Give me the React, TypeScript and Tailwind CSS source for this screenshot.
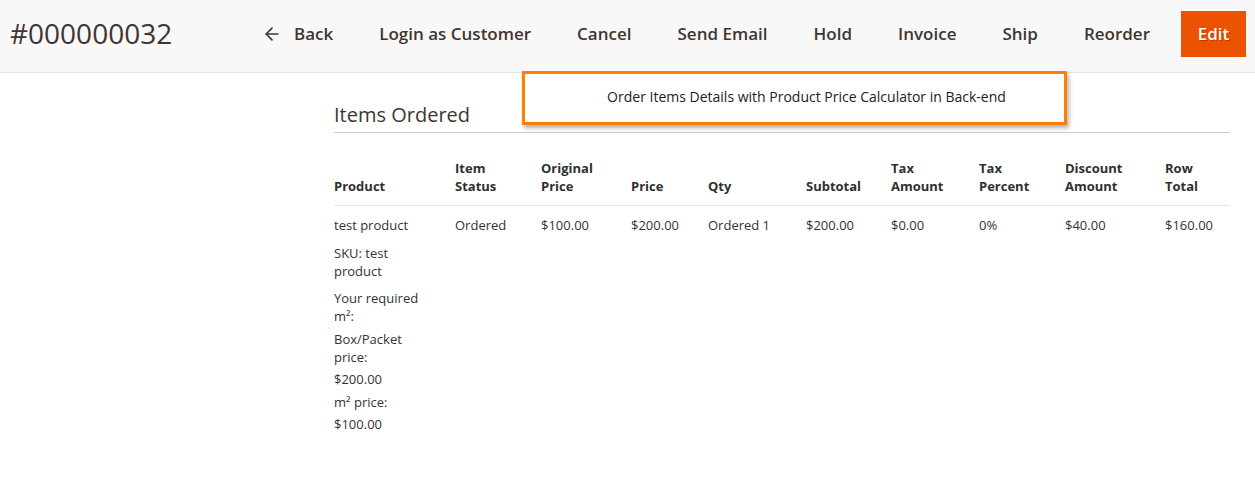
import { ArrowLeft } from "lucide-react";

const ACTIONS = ["Login as Customer", "Cancel", "Send Email", "Hold", "Invoice", "Ship", "Reorder"];

const COLUMNS = [
  { label: ["", "Product"], w: "w-[121px]" },
  { label: ["Item", "Status"], w: "w-[86px]" },
  { label: ["Original", "Price"], w: "w-[90px]" },
  { label: ["", "Price"], w: "w-[77px]" },
  { label: ["", "Qty"], w: "w-[98px]" },
  { label: ["", "Subtotal"], w: "w-[85px]" },
  { label: ["Tax", "Amount"], w: "w-[88px]" },
  { label: ["Tax", "Percent"], w: "w-[86px]" },
  { label: ["Discount", "Amount"], w: "w-[100px]" },
  { label: ["Row", "Total"], w: "w-[65px]" },
];

const VALUES = ["Ordered", "$100.00", "$200.00", "Ordered 1", "$200.00", "$0.00", "0%", "$40.00", "$160.00"];

export default function App() {
  return (
    <div className="relative w-[1255px] h-[492px] bg-white overflow-hidden text-[#303030] [font-family:'Open_Sans',sans-serif]">
      {/* page actions bar */}
      <header className="h-[73px] bg-[#f8f8f8] border-b border-[#e3e3e3] flex items-center pl-[10px] pr-[9px] pb-[4px]">
        <h1 className="text-[28px] font-normal text-[#41362f] leading-none mb-[2px]">#000000032</h1>
        <div className="ml-auto flex items-center text-[17px] font-semibold text-[#41362f]">
          <button className="flex items-center gap-[12px] mr-[46px]">
            <ArrowLeft className="w-[20px] h-[20px]" strokeWidth={2} />
            Back
          </button>
          <div className="flex items-center gap-[46px]">
            {ACTIONS.map((a) => (
              <button key={a}>{a}</button>
            ))}
          </div>
          <button className="ml-[31px] h-[46px] w-[65px] bg-[#eb5202] text-white [text-shadow:1px_1px_0_rgba(0,0,0,0.25)]">
            Edit
          </button>
        </div>
      </header>

      {/* annotation callout */}
      <div className="absolute left-[522px] top-[71px] w-[545px] h-[54px] bg-white border-[3px] border-[#ff8000] shadow-[2px_3px_4px_rgba(0,0,0,0.3)] flex items-center justify-center pl-[24px] pb-[3px] text-[14px] text-[#222]">
        Order Items Details with Product Price Calculator in Back-end
      </div>

      <main className="pl-[334px] pr-[25px] pt-[27px]">
        <h2 className="text-[20px] font-normal text-[#41362f] leading-[30px] pb-[2px] border-b border-[#cccccc]">
          Items Ordered
        </h2>

        <table className="mt-[26px] table-fixed border-collapse text-[13px] leading-[18px]">
          <thead>
            <tr className="border-b border-[#e3e3e3]">
              {COLUMNS.map((c, i) => (
                <th key={i} className={`${c.w} text-left font-bold align-bottom pb-[10px]`}>
                  {c.label[0] && <div>{c.label[0]}</div>}
                  <div>{c.label[1]}</div>
                </th>
              ))}
            </tr>
          </thead>
          <tbody>
            <tr>
              <td className="align-top pt-[10px] pr-[26px] text-[#333]">
                <div>test product</div>
                <div className="mt-[10px]">SKU: test product</div>
                <dl>
                  <dt className="mt-[9px]">Your required m²:</dt>
                  <dd></dd>
                  <dt className="mt-[5px]">Box/Packet price:</dt>
                  <dd className="mt-[4px]">$200.00</dd>
                  <dt className="mt-[5px]">m² price:</dt>
                  <dd className="mt-[4px]">$100.00</dd>
                </dl>
              </td>
              {VALUES.map((v, i) => (
                <td key={i} className="align-top pt-[10px] text-[#333] whitespace-nowrap">
                  {v}
                </td>
              ))}
            </tr>
          </tbody>
        </table>
      </main>
    </div>
  );
}
